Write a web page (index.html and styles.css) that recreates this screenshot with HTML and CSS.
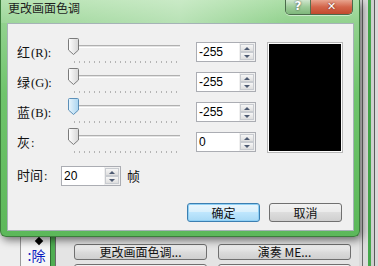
FILE: index.html
```html
<!DOCTYPE html>
<html lang="zh-CN">
<head>
  <meta charset="UTF-8">
  <title>更改画面色调</title>
  <link rel="stylesheet" href="styles.css">
</head>
<body>
  <div class="screen">
    <div class="app">
      <div class="app-main">
        <div class="app-row">
          <div class="app-gutter"></div>
          <div class="app-list">
            <span class="diamond"></span>
            <span class="app-del">:除</span>
          </div>
          <div class="app-bar"></div>
          <div class="app-buttons">
            <div class="app-btn">更改画面色调...</div>
            <div class="app-btn">演奏 ME...</div>
            <div class="app-btn"></div>
            <div class="app-btn"></div>
          </div>
        </div>
      </div>
      <div class="app-edge"></div>
    </div>

    <div class="dialog">
      <div class="titlebar">
        <span class="title">更改画面色调</span>
        <div class="caption-btns">
          <span class="cap-help">?</span>
          <span class="cap-close">✕</span>
        </div>
      </div>
      <div class="client">
        <div class="grid">
          <span class="label">红<small>(R):</small></span>
          <div class="slider"><div class="track"></div><div class="ticks"></div><svg class="thumb" width="11" height="17" viewBox="0 0 11 17"><path d="M0.5 1.5 Q0.5 0.5 1.5 0.5 H9.5 Q10.5 0.5 10.5 1.5 V12 L5.5 16.5 L0.5 12 Z" fill="url(#th)" stroke="#7b7b7b"/></svg></div>
          <div class="spin"><span class="spin-val">-255</span><span class="spin-btns"><i class="up"></i><i class="down"></i></span></div>
          <div class="preview"></div>

          <span class="label">绿<small>(G):</small></span>
          <div class="slider"><div class="track"></div><div class="ticks"></div><svg class="thumb" width="11" height="17" viewBox="0 0 11 17"><path d="M0.5 1.5 Q0.5 0.5 1.5 0.5 H9.5 Q10.5 0.5 10.5 1.5 V12 L5.5 16.5 L0.5 12 Z" fill="url(#th)" stroke="#7b7b7b"/></svg></div>
          <div class="spin"><span class="spin-val">-255</span><span class="spin-btns"><i class="up"></i><i class="down"></i></span></div>

          <span class="label">蓝<small>(B):</small></span>
          <div class="slider"><div class="track"></div><div class="ticks"></div><svg class="thumb" width="11" height="17" viewBox="0 0 11 17"><path d="M0.5 1.5 Q0.5 0.5 1.5 0.5 H9.5 Q10.5 0.5 10.5 1.5 V12 L5.5 16.5 L0.5 12 Z" fill="url(#thb)" stroke="#5b8fb8"/></svg></div>
          <div class="spin"><span class="spin-val">-255</span><span class="spin-btns"><i class="up"></i><i class="down"></i></span></div>

          <span class="label">灰<small>:</small></span>
          <div class="slider"><div class="track"></div><div class="ticks"></div><svg class="thumb" width="11" height="17" viewBox="0 0 11 17"><path d="M0.5 1.5 Q0.5 0.5 1.5 0.5 H9.5 Q10.5 0.5 10.5 1.5 V12 L5.5 16.5 L0.5 12 Z" fill="url(#th)" stroke="#7b7b7b"/></svg></div>
          <div class="spin"><span class="spin-val">0</span><span class="spin-btns"><i class="up"></i><i class="down"></i></span></div>
        </div>

        <div class="time-row">
          <span class="label time-label">时间<small>:</small></span>
          <div class="spin"><span class="spin-val">20</span><span class="spin-btns"><i class="up"></i><i class="down"></i></span></div>
          <span class="label">帧</span>
        </div>

        <div class="actions">
          <div class="btn default">确定</div>
          <div class="btn">取消</div>
        </div>
      </div>
    </div>
  </div>

  <svg width="0" height="0" class="defs">
    <defs>
      <linearGradient id="th" x1="0" y1="0" x2="1" y2="0">
        <stop offset="0" stop-color="#ffffff"/>
        <stop offset="1" stop-color="#d6d6d6"/>
      </linearGradient>
      <linearGradient id="thb" x1="0" y1="0" x2="1" y2="0">
        <stop offset="0" stop-color="#eaf6fd"/>
        <stop offset="1" stop-color="#a9d4f0"/>
      </linearGradient>
    </defs>
  </svg>
</body>
</html>
```

FILE: styles.css
```css
*{
  margin:0;
  padding:0;
  box-sizing:border-box;
}
body{
  font-family:"Noto Sans CJK SC", "Liberation Sans", sans-serif;
  font-size:12px;
  color:#1a1a1a;
  background:#e6e6e6;
}
.screen{
  position:relative;
  width:378px;
  height:266px;
  overflow:hidden;
}
.defs{
  position:absolute;
}

/* window behind the dialog */
.app{
  display:grid;
  grid-template-columns:359px 19px;
  height:266px;
}
.app-main{
  display:flex;
  flex-direction:column;
  justify-content:flex-end;
  background:#e4e4e4;
}
.app-row{
  display:flex;
  height:30px;
}
.app-gutter{
  width:21px;
  background:#eeeeee;
  border-right:1px solid #9a9a9a;
}
.app-list{
  width:29px;
  background:#f6f6f6;
  display:flex;
  flex-direction:column;
  align-items:center;
}
.diamond{
  width:6px;
  height:6px;
  margin:2px 0 0 6px;
  background:#000;
  transform:rotate(45deg);
}
.app-del{
  font-size:14px;
  line-height:16px;
  color:#0a1cc0;
  margin-top:3px;
  padding-left:2px;
}
.app-bar{
  width:6px;
  background:#4fae52;
  border-left:1px solid #2f6f33;
  border-right:1px solid #6a6a6a;
}
.app-buttons{
  flex:1;
  display:grid;
  grid-template-columns:133px 133px;
  column-gap:11px;
  row-gap:4px;
  padding:8px 0 0 18px;
  align-content:start;
}
.app-btn{
  height:16px;
  border:1px solid #707070;
  border-radius:3px;
  background:linear-gradient(#f3f3f3, #dadada 55%, #cfcfcf);
  font-size:12px;
  line-height:14px;
  text-align:center;
  color:#111;
}
.app-edge{
  background:linear-gradient(90deg, #d9d9d9 0 3px, #6c6c6c 3px 4px, #dcdcdc 4px 9px, #45a84b 9px 12px, #cfcfcf 12px 15px, #5a5a5a 15px 16px, #d8d8d8 16px);
}

/* dialog */
.dialog{
  position:absolute;
  left:0;
  top:0;
  width:360px;
  height:237px;
  display:flex;
  flex-direction:column;
  border:1px solid #3c7d3c;
  border-top:0;
  border-radius:0 0 6px 6px;
  background:linear-gradient(180deg, #addfa8 0, #93d28f 22px, #6fc46c 40%, #5cb85a 100%);
  box-shadow:2px 3px 8px rgba(0,0,0,.55);
}
.titlebar{
  height:23px;
  position:relative;
  background:linear-gradient(90deg, rgba(255,255,255,.1) 0, rgba(255,255,255,.35) 50%, rgba(255,255,255,0) 80%);
}
.title{
  display:block;
  padding:0 0 0 7px;
  font-size:12px;
  line-height:16px;
  color:#1e1e1e;
}
.caption-btns{
  position:absolute;
  right:6px;
  top:0;
  display:flex;
  height:15px;
  border:1px solid #4b6b4b;
  border-top:0;
  border-radius:0 0 5px 5px;
  overflow:hidden;
  box-shadow:0 1px 0 rgba(255,255,255,.5);
}
.cap-help{
  width:25px;
  background:linear-gradient(#cfe6cd, #9ccb98 50%, #7fb77b);
  border-right:1px solid #56704f;
  color:#fff;
  font-family:"DejaVu Sans", sans-serif;
  font-weight:bold;
  font-size:12px;
  line-height:13px;
  text-align:center;
  text-shadow:0 0 2px #333;
}
.cap-close{
  width:41px;
  background:linear-gradient(#e8a48e, #d3654a 50%, #c24a2d);
  color:#fff;
  font-family:"DejaVu Sans", sans-serif;
  font-weight:bold;
  font-size:11px;
  line-height:13px;
  text-align:center;
  text-shadow:0 0 2px #5a1a0a;
}
.client{
  flex:1;
  margin:0 5px 5px 6px;
  border:1px solid #a5b3b6;
  background:#f0f0f0;
  padding:18px 11px 0 9px;
}
.grid{
  display:grid;
  grid-template-columns:50px 129px 72px 74px;
  grid-template-rows:repeat(4, 20px);
  row-gap:10px;
}
.label{
  font-size:13px;
  line-height:20px;
  color:#111;
  white-space:nowrap;
}
.label small{
  font-family:"Liberation Serif", serif;
  font-size:12.5px;
  margin-left:1px;
}
.slider{
  position:relative;
  width:116px;
  height:20px;
}
.track{
  position:absolute;
  left:4px;
  right:3px;
  top:3px;
  height:3px;
  border-top:1px solid #b0b0b0;
  border-bottom:1px solid #ffffff;
  background:#e3e3e3;
}
.ticks{
  position:absolute;
  left:7px;
  width:103px;
  top:19px;
  height:2px;
  background:repeating-linear-gradient(90deg, #b4b4b4 0 1px, transparent 1px 5.1px);
}
.thumb{
  position:absolute;
  left:1px;
  top:-4px;
}
.spin{
  display:flex;
  width:60px;
  height:20px;
  border:1px solid #abadb3;
  background:#fff;
}
.spin-val{
  flex:1;
  padding-left:2px;
  font-family:"Liberation Sans", sans-serif;
  font-size:12px;
  line-height:18px;
  color:#000;
}
.spin-btns{
  width:16px;
  display:flex;
  flex-direction:column;
  padding:1px;
  background:#f0f0f0;
}
.spin-btns i{
  flex:1;
  position:relative;
  border:1px solid #c8cbd0;
  background:linear-gradient(#f6f6f6, #dedede);
}
.spin-btns i::after{
  content:"";
  position:absolute;
  left:3px;
  top:2px;
  border-left:3px solid transparent;
  border-right:3px solid transparent;
}
.spin-btns .up::after{
  border-bottom:3px solid #4e5b73;
}
.spin-btns .down::after{
  border-top:3px solid #4e5b73;
}
.preview{
  grid-column:4;
  grid-row:1 / 5;
  margin-top:1px;
  background:#000;
  border:1px solid #fdfdfd;
  box-shadow:0 0 0 1px #b8b8b8;
}
.time-row{
  display:flex;
  align-items:center;
  margin-top:13px;
}
.time-label{
  width:44px;
}
.time-row .spin{
  margin-right:6px;
}
.actions{
  display:flex;
  justify-content:flex-end;
  gap:9px;
  margin-top:17px;
}
.btn{
  width:73px;
  height:19px;
  border:1px solid #707070;
  border-radius:3px;
  background:linear-gradient(#f2f2f2, #ebebeb 45%, #dddddd 50%, #cfcfcf);
  font-size:12px;
  line-height:17px;
  text-align:center;
  color:#111;
}
.btn.default{
  border-color:#3c7fb1;
  background:linear-gradient(#eaf6fd, #d9f0fc 45%, #bee6fd 50%, #a7d9f5);
  box-shadow:inset 0 0 0 1px #8fd0f5;
}
```
